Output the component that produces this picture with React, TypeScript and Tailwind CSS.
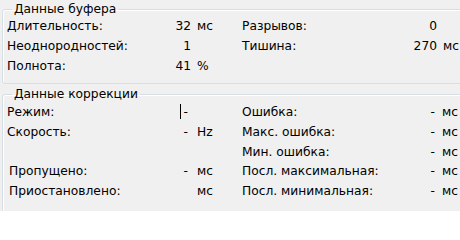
type Row = { label: string; num?: string; unit?: string; caret?: boolean; indent?: boolean };

const bufLeft: Row[] = [
  { label: "Длительность:", num: "32", unit: "мс" },
  { label: "Неоднородностей:", num: "1" },
  { label: "Полнота:", num: "41", unit: "%" },
];

const bufRight: Row[] = [
  { label: "Разрывов:", num: "0" },
  { label: "Тишина:", num: "270", unit: "мс" },
];

const corrLeft: (Row | null)[] = [
  { label: "Режим:", num: "-", caret: true },
  { label: "Скорость:", num: "-", unit: "Hz" },
  null,
  { label: "Пропущено:", num: "-", unit: "мс", indent: true },
  { label: "Приостановлено:", unit: "мс", indent: true },
];

const corrRight: Row[] = [
  { label: "Ошибка:", num: "-", unit: "мс" },
  { label: "Макс. ошибка:", num: "-", unit: "мс" },
  { label: "Мин. ошибка:", num: "-", unit: "мс" },
  { label: "Посл. максимальная:", num: "-", unit: "мс" },
  { label: "Посл. минимальная:", num: "-", unit: "мс" },
];

function BufRow({ row, right }: { row: Row; right?: boolean }) {
  return (
    <div className="flex h-5 leading-5 whitespace-nowrap">
      <span className={right ? "w-[160px]" : "w-[150px]"}>{row.label}</span>
      <span className={right ? "w-[35px] text-right" : "w-[34px] text-right"}>{row.num}</span>
      <span className="pl-[6px]">{row.unit}</span>
    </div>
  );
}

function CorrRow({ row, right }: { row: Row | null; right?: boolean }) {
  if (!row) return <div className="h-[19.75px]" />;
  return (
    <div className="flex h-[19.75px] leading-5 whitespace-nowrap">
      <span className={(right ? "w-[160px]" : "w-[150px]") + (row.indent ? " pl-[2px]" : "")}>{row.label}</span>
      <span className={right ? "w-[33px] text-right" : "w-[31px] flex items-center justify-end text-right"}>
        {row.caret && <span className="inline-block w-px h-[15px] bg-black mr-[3px]" />}
        {row.num}
      </span>
      <span className={right ? "pl-[7px]" : "pl-[9px]"}>{row.unit}</span>
    </div>
  );
}

export default function App() {
  return (
    <div className="w-[460px] h-[211px] overflow-hidden bg-[#f0f0f0] font-['DejaVu_Sans',Verdana,sans-serif] text-[12.25px] text-black">
      <fieldset className="ml-[2px] mt-[2px] w-[470px] h-[82px] border border-[#d5dfe5] rounded-[3px] pl-[4px] shadow-[inset_1px_1px_0_#fff]">
        <legend className="ml-[5px] px-[2px] leading-[15px]">Данные буфера</legend>
        <div className="flex -mt-[1px]">
          <div className="w-[235px] flex flex-col">
            {bufLeft.map((r) => (
              <BufRow key={r.label} row={r} />
            ))}
          </div>
          <div className="flex flex-col">
            {bufRight.map((r) => (
              <BufRow key={r.label} row={r} right />
            ))}
          </div>
        </div>
      </fieldset>
      <fieldset className="ml-[2px] mt-[3px] w-[470px] h-[140px] border border-[#d5dfe5] rounded-[3px] pl-[4px] shadow-[inset_1px_1px_0_#fff]">
        <legend className="ml-[5px] px-[2px] leading-[15px]">Данные коррекции</legend>
        <div className="flex">
          <div className="w-[235px] flex flex-col">
            {corrLeft.map((r, i) => (
              <CorrRow key={i} row={r} />
            ))}
          </div>
          <div className="flex flex-col">
            {corrRight.map((r) => (
              <CorrRow key={r.label} row={r} right />
            ))}
          </div>
        </div>
      </fieldset>
    </div>
  );
}
